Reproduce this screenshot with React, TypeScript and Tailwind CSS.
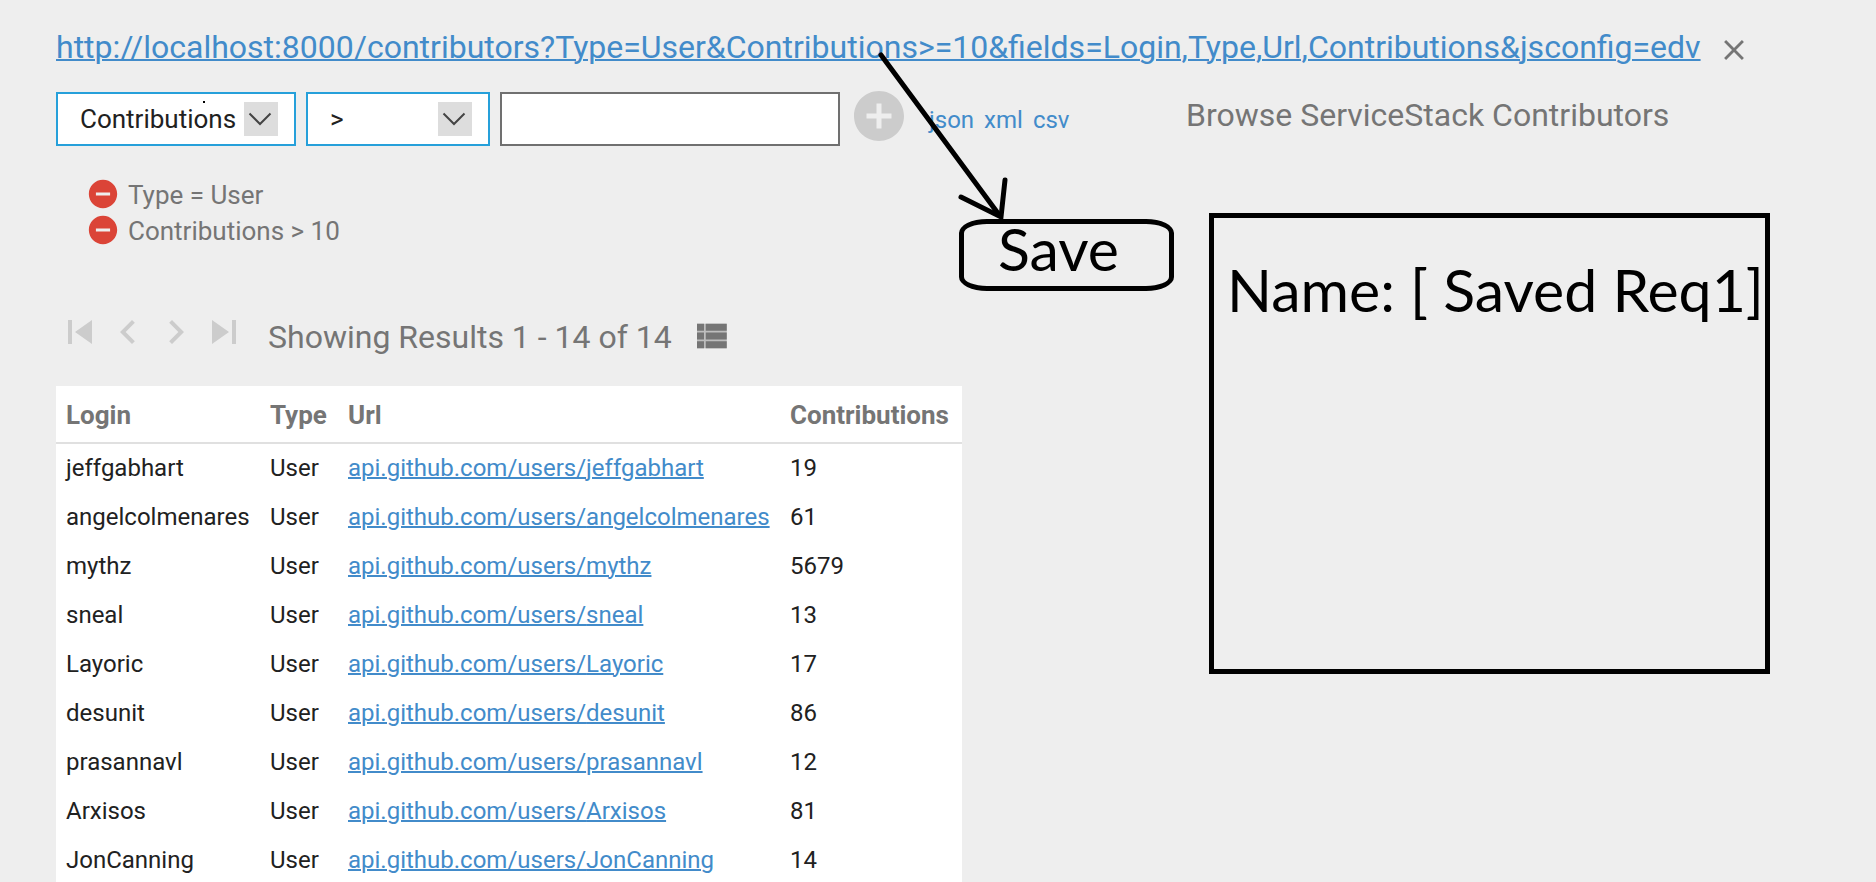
import React from 'react';
import {
  MdAddCircle,
  MdChevronLeft,
  MdChevronRight,
  MdClose,
  MdRemoveCircle,
  MdSkipNext,
  MdSkipPrevious,
} from 'react-icons/md';

const queryUrl =
  'http://localhost:8000/contributors?Type=User&Contributions>=10&fields=Login,Type,Url,Contributions&jsconfig=edv';

const filters = ['Type = User', 'Contributions > 10'];

const contributors = [
  { login: 'jeffgabhart', contributions: 19 },
  { login: 'angelcolmenares', contributions: 61 },
  { login: 'mythz', contributions: 5679 },
  { login: 'sneal', contributions: 13 },
  { login: 'Layoric', contributions: 17 },
  { login: 'desunit', contributions: 86 },
  { login: 'prasannavl', contributions: 12 },
  { login: 'Arxisos', contributions: 81 },
  { login: 'JonCanning', contributions: 14 },
];

const pagerButtons = [
  { label: 'First page', icon: MdSkipPrevious },
  { label: 'Previous page', icon: MdChevronLeft },
  { label: 'Next page', icon: MdChevronRight },
  { label: 'Last page', icon: MdSkipNext },
];

interface SelectBoxProps {
  label: string;
  options: string[];
  className: string;
}

function SelectBox({ label, options, className }: SelectBoxProps) {
  return (
    <div className={`relative h-[54px] ${className}`}>
      <select
        aria-label={label}
        className="h-full w-full appearance-none border-2 border-[#26a0da] bg-white pl-[22px] text-[26px] text-[#212121]"
      >
        {options.map(option => (
          <option key={option}>{option}</option>
        ))}
      </select>
      <svg viewBox="0 0 34 34" className="pointer-events-none absolute top-[10px] right-[18px] h-[34px] w-[34px] bg-[#dddddd]">
        <path d="M5.5 11.5L16 22L26.5 11.5" fill="none" stroke="#444" strokeWidth="2" />
      </svg>
    </div>
  );
}

function ViewListIcon() {
  return (
    <svg viewBox="0 0 24 24" fill="currentColor" className="size-[42px]">
      <path d="M4 5h17v14H4z" opacity="0.4" />
      <path d="M4 14h4v-4H4v4zm0 5h4v-4H4v4zM4 9h4V5H4v4zm5 5h12v-4H9v4zm0 5h12v-4H9v4zM9 5v4h12V5H9z" />
    </svg>
  );
}

function ResultsTable() {
  return (
    <table className="w-[906px] table-fixed bg-white text-left text-2xl text-[#212121]">
      <colgroup>
        <col className="w-[204px]" />
        <col className="w-[78px]" />
        <col className="w-[442px]" />
        <col />
      </colgroup>
      <thead>
        <tr className="h-[57px] border-b-2 border-[#e0e0e0] text-[26px] text-[#757575]">
          <th className="pt-[2px] pl-[10px] font-bold">Login</th>
          <th className="pt-[2px] pl-[10px] font-bold">Type</th>
          <th className="pt-[2px] pl-[10px] font-bold">Url</th>
          <th className="pt-[2px] pl-[10px] font-bold">Contributions</th>
        </tr>
      </thead>
      <tbody>
        {contributors.map(({ login, contributions }) => (
          <tr key={login} className="h-[49px]">
            <td className="pl-[10px]">{login}</td>
            <td className="pl-[10px]">User</td>
            <td className="pl-[10px]">
              <a href="#" className="text-[#428bca] underline decoration-2">
                api.github.com/users/{login}
              </a>
            </td>
            <td className="pl-[10px]">{contributions}</td>
          </tr>
        ))}
      </tbody>
    </table>
  );
}

// Hand-drawn arrow from the query url down to the Save box
function ArrowAnnotation() {
  return (
    <svg viewBox="0 0 1176 230" className="pointer-events-none absolute top-0 left-0 h-[230px] w-[1176px]">
      <g fill="none" stroke="#000" strokeWidth="5" strokeLinecap="round">
        <path d="M881 55L997 212" />
        <path d="M961 197L1001 217L1005 180" />
      </g>
      <rect x="203" y="101" width="2" height="2" />
    </svg>
  );
}

export default function App() {
  return (
    <div className="relative h-screen overflow-hidden bg-[#eeeeee] pt-[26px] pl-14 font-['Roboto',sans-serif] text-[#757575]">
      <div className="flex h-12 items-center gap-4">
        <a href="#" className="pb-[6px] text-[32px] whitespace-nowrap text-[#428bca] underline decoration-2">
          {queryUrl}
        </a>
        <button aria-label="Clear query">
          <MdClose className="size-[34px]" />
        </button>
      </div>

      <div className="mt-[18px] flex h-[54px] items-center">
        <SelectBox label="Field" options={['Contributions']} className="w-[240px]" />
        <SelectBox label="Condition" options={['>']} className="ml-[10px] w-[184px]" />
        <input aria-label="Value" className="ml-[10px] h-[54px] w-[340px] border-2 border-[#707070] bg-white px-5 text-[26px]" />
        <button aria-label="Add condition" className="ml-[9px] pb-[6px] text-[#cccccc]">
          <MdAddCircle className="size-[60px]" />
        </button>
        <nav className="ml-5 flex w-[257px] gap-[10px] pt-[2px] text-2xl text-[#428bca]">
          <a href="#">json</a>
          <a href="#">xml</a>
          <a href="#">csv</a>
        </nav>
        <h1 className="pb-2 text-[32px] whitespace-nowrap">Browse ServiceStack Contributors</h1>
      </div>

      <div className="flex items-start">
        <div className="w-[1118px] shrink-0">
          <div className="mt-[30px] flex items-start justify-between">
            <ul className="pl-[30px] text-[26px]">
              {filters.map(filter => (
                <li key={filter} className="flex h-9 items-center gap-2">
                  <button aria-label={`Remove ${filter}`} className="text-[#db4437]">
                    <MdRemoveCircle className="size-[34px]" />
                  </button>
                  <span className="pt-[2px] leading-8">{filter}</span>
                </li>
              ))}
            </ul>
            <button className="mt-[43px] h-[72px] w-[215px] rounded-[28px/14px] border-5 border-black pr-4 pb-3 font-['Lato',sans-serif] text-[59px] leading-[50px] text-black">
              Save
            </button>
          </div>

          <div className="mt-[17px] flex h-12 items-center">
            {pagerButtons.map(({ label, icon: Icon }) => (
              <button key={label} aria-label={label} className="text-[#cccccc]">
                <Icon className="size-12" />
              </button>
            ))}
            <span className="ml-5 pt-[10px] text-[32px]">Showing Results 1 - 14 of 14</span>
            <button aria-label="Toggle view" className="ml-[18px] pt-2">
              <ViewListIcon />
            </button>
          </div>

          <div className="mt-[30px]">
            <ResultsTable />
          </div>
        </div>

        <div className="mt-[67px] ml-[35px] h-[461px] w-[561px] shrink-0 border-5 border-black pt-10 pl-[13px] font-['Lato',sans-serif] text-[59px] leading-[64px] whitespace-nowrap text-black">
          Name: [ Saved Req1]
        </div>
      </div>

      <ArrowAnnotation />
    </div>
  );
}
